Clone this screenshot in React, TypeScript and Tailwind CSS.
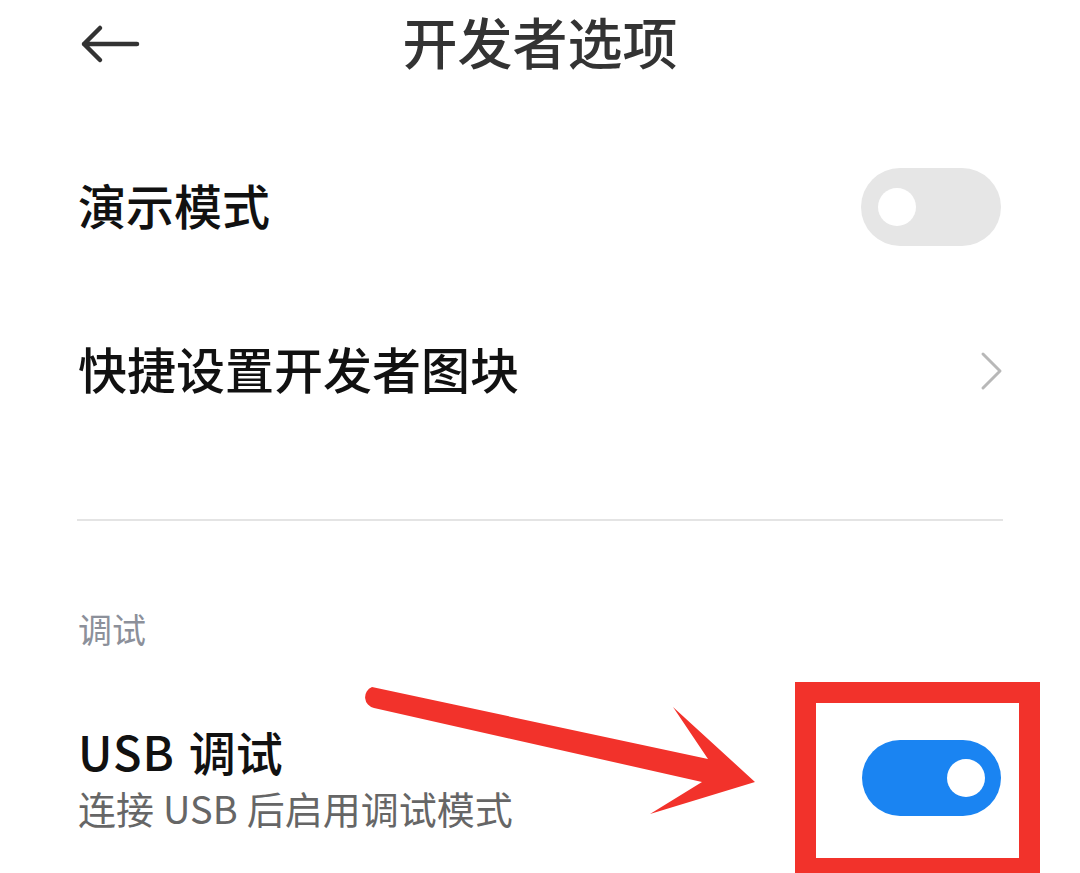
import React from "react";

function Toggle({ on }: { on: boolean }) {
  return (
    <div
      className={
        on
          ? "flex h-[76px] w-[139px] items-center justify-end rounded-full bg-[#1a84f2] pr-[16px]"
          : "flex h-[78px] w-[140px] items-center justify-start rounded-full bg-[#e6e6e6] pl-[17px]"
      }
    >
      <div className="h-[38px] w-[38px] rounded-full bg-white" />
    </div>
  );
}

export default function App() {
  return (
    <div
      className="relative h-[873px] w-[1080px] overflow-hidden bg-white"
      style={{ fontFamily: '"Noto Sans CJK SC", "Noto Sans", sans-serif' }}
    >
      {/* Header */}
      <div className="grid h-[88px] grid-cols-[1fr_auto_1fr] items-center px-[78px]">
        <div className="flex items-center">
          <svg width="60" height="40" viewBox="0 0 60 40" className="ml-[2px]">
            <path
              d="M4 20 H57 M20 4 L4 20 L20 36"
              fill="none"
              stroke="#333"
              strokeWidth="4.5"
              strokeLinecap="round"
              strokeLinejoin="round"
            />
          </svg>
        </div>
        <div className="-mt-[8px] text-[55px] font-medium leading-none text-[#333]">
          开发者选项
        </div>
        <div />
      </div>

      {/* Row 1 */}
      <div className="mt-[37px] flex h-[164px] items-center justify-between pl-[78px] pr-[79px]">
        <div className="-mt-[6px] text-[48px] font-medium leading-none text-[#111]">演示模式</div>
        <Toggle on={false} />
      </div>

      {/* Row 2 */}
      <div className="flex h-[164px] items-center justify-between pl-[78px] pr-[77px]">
        <div className="-mt-[8px] text-[49px] font-medium leading-none text-[#111]">快捷设置开发者图块</div>
        <svg width="24" height="40" viewBox="0 0 24 40">
          <path
            d="M4 3 L21 20 L4 37"
            fill="none"
            stroke="#b8b8b8"
            strokeWidth="3"
            strokeLinecap="round"
            strokeLinejoin="round"
          />
        </svg>
      </div>

      {/* Divider */}
      <div className="mx-[77px] mt-[66px] h-[2px] bg-[#e4e4e4]" />

      {/* Section header */}
      <div className="mt-[83px] flex h-[50px] items-center pl-[78px] text-[34px] leading-none text-[#8c909a]">
        调试
      </div>

      {/* USB row */}
      <div className="mt-[68px] flex items-center justify-between pl-[78px] pr-[79px]">
        <div className="flex flex-col">
          <div className="flex h-[56px] items-center text-[47px] font-medium leading-none text-[#111]">
            <span className="mr-[14px] tracking-[1px]">USB</span>
            <span>调试</span>
          </div>
          <div className="mt-[5px] flex h-[50px] items-center text-[38px] leading-none text-[#666]">
            <span>连接</span>
            <span className="mx-[9px]">USB</span>
            <span>后启用调试模式</span>
          </div>
        </div>
        <Toggle on={true} />
      </div>

      {/* Annotation: red box */}
      <div className="pointer-events-none absolute left-[795px] top-[682px] h-[197px] w-[245px] border-[21px] border-[#f2322b]" />

      {/* Annotation: arrow */}
      <svg
        className="pointer-events-none absolute left-0 top-0"
        width="1080"
        height="873"
        viewBox="0 0 1080 873"
      >
        <path
          d="M372 687 L708 759 L673 707 L755 782 L650 814 L702 782 L374 708 A11 11 0 0 1 372 687 Z"
          fill="#f2322b"
        />
      </svg>
    </div>
  );
}
